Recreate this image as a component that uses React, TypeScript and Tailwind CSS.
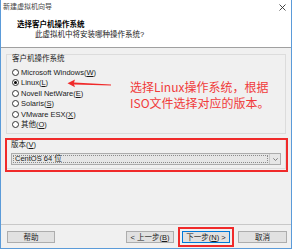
import React from "react";

const font = "font-['Liberation_Sans','Noto_Sans_CJK_SC',sans-serif]";

// access-key label like Linux(L) with underlined letter
const Key = ({ text, k, after = "" }: { text: string; k: string; after?: string }) => (
  <span>
    {text}(<span className="underline underline-offset-1">{k}</span>){after}
  </span>
);

const Radio = ({ checked, children }: { checked?: boolean; children: React.ReactNode }) => (
  <div className="flex items-center h-[10.5px] gap-[2px]">
    <span className="w-[7px] h-[7px] rounded-full border border-[#333] bg-white flex items-center justify-center shrink-0">
      {checked && <span className="w-[3px] h-[3px] rounded-full bg-black" />}
    </span>
    <span className="leading-[9px]">{children}</span>
  </div>
);

const Btn = ({ children, primary }: { children: React.ReactNode; primary?: boolean }) => (
  <div
    className={`h-[12px] flex items-center justify-center bg-[#e1e1e1] border leading-[9px] ${
      primary ? "border-[#0078d7]" : "border-[#adadad]"
    }`}
  >
    {children}
  </div>
);

export default function App() {
  const systems = [
    { text: "Microsoft Windows", k: "W" },
    { text: "Linux", k: "L", checked: true },
    { text: "Novell NetWare", k: "E" },
    { text: "Solaris", k: "S" },
    { text: "VMware ESX", k: "X" },
    { text: "其他", k: "O" },
  ];

  return (
    <div className={`w-[293px] h-[250px] bg-white text-[7.5px] text-[#1a1a1a] ${font}`}>
      <div className="w-[292px] h-[249px] flex flex-col bg-[#f0f0f0] border-x border-b border-[#5b9bd9]">
        {/* title bar */}
        <div className="h-[14px] bg-white flex items-center justify-between pl-[2px] pr-[5px]">
          <span className="text-[7px] leading-[8px] text-[#444]">新建虚拟机向导</span>
          <svg width="7" height="7" viewBox="0 0 7 7">
            <path d="M0.5 0.5 L6.5 6.5 M6.5 0.5 L0.5 6.5" stroke="#333" strokeWidth="0.9" />
          </svg>
        </div>

        {/* header */}
        <div className="h-[34px] bg-white border-b border-[#a0a0a0] pt-[6px]">
          <div className="pl-[16px] font-bold leading-[9px] text-black">选择客户机操作系统</div>
          <div className="pl-[34px] mt-[1px] leading-[9px]">此虚拟机中将安装哪种操作系统?</div>
        </div>

        {/* body */}
        <div className="flex-1 px-[5px] pt-[6px]">
          <div className="relative h-[80px] border border-[#dcdcdc] pl-[5px]">
            <div className="leading-[6px] mt-[1px]">客户机操作系统</div>
            <div className="mt-[5px] flex flex-col">
              {systems.map((s) => (
                <Radio key={s.k} checked={s.checked}>
                  <Key text={s.text} k={s.k} />
                </Radio>
              ))}
            </div>

            {/* annotation */}
            <svg className="absolute left-[60px] top-[23px]" width="46" height="11" viewBox="0 0 46 11">
              <polygon points="0.5,5.3 8,1.6 7,4.4 44,6.6 44,7.6 7,6.6 8,9.2" fill="#f02a2a" />
            </svg>
            <div className="absolute left-[123px] top-[24px] text-[12px] leading-[16px] text-[#f03a3a] font-['Noto_Sans_CJK_SC',sans-serif]">
              <div>选择Linux操作系统，根据</div>
              <div>ISO文件选择对应的版本。</div>
            </div>
          </div>

          <div className="relative mt-[5px] h-[30px] border border-[#dcdcdc] pl-[4px] pr-[4px]">
            <div className="leading-[8px] pt-[1px]">
              <Key text="版本" k="V" />
            </div>
            <div className="mt-[4px] h-[12px] flex bg-[#e6e6e6] border border-[#acacac]">
              <div className="flex-1 m-[1px] border border-dotted border-[#8a8a8a] flex items-center pl-[1px] leading-[8px]">
                CentOS 64 位
              </div>
              <div className="w-[11px] border-l border-[#c8c8c8] flex items-center justify-center">
                <svg width="5" height="3" viewBox="0 0 5 3">
                  <path d="M0.3 0.3 L2.5 2.5 L4.7 0.3" stroke="#666" strokeWidth="0.8" fill="none" />
                </svg>
              </div>
            </div>
            <div className="absolute -left-[2px] -top-[2px] -right-[3px] -bottom-[4px] border-2 border-[#f02a2a]" />
          </div>
        </div>

        {/* footer */}
        <div className="h-[24px] border-t border-[#c8c8c8] flex items-start pt-[6px] pl-[6px] pr-[4px]">
          <div className="w-[48px]">
            <Btn>帮助</Btn>
          </div>
          <div className="flex-1" />
          <div className="w-[48px]">
            <Btn>
              {"< 上一步("}
              <span className="underline underline-offset-1">B</span>)
            </Btn>
          </div>
          <div className="relative w-[48px] ml-[8px]">
            <Btn primary>
              下一步(<span className="underline underline-offset-1">N</span>
              {") >"}
            </Btn>
            <div className="absolute -inset-[4px] border-2 border-[#f02a2a]" />
          </div>
          <div className="w-[49px] ml-[8px]">
            <Btn>取消</Btn>
          </div>
        </div>
      </div>
    </div>
  );
}
